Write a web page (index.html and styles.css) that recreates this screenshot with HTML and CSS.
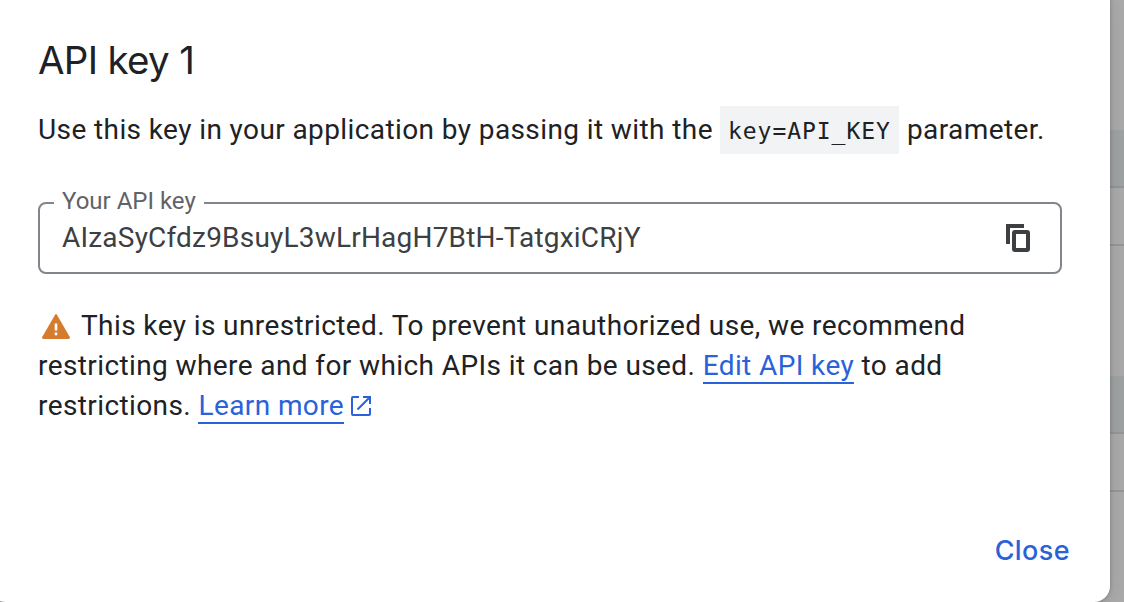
FILE: index.html
```html
<!DOCTYPE html>
<html lang="en">
<head>
<meta charset="utf-8">
<title>API key 1</title>
<link rel="stylesheet" href="styles.css">
</head>
<body>
<div class="screen">
  <div class="page-behind" aria-hidden="true">
    <div class="space"></div><div class="row head"></div><div class="row"></div>
    <div class="space"></div><div class="row head"></div><div class="row"></div>
  </div>
  <main class="dialog" role="dialog" aria-labelledby="title">
    <h1 class="title" id="title">API key 1</h1>
    <p class="intro"><span class="intro-text">Use this key in your application by passing it with the</span><code class="code">key=API_KEY</code><span class="intro-end">parameter.</span></p>
    <fieldset class="field">
      <legend class="label">Your API key</legend>
      <span class="value">AIzaSyCfdz9BsuyL3wLrHagH7BtH-TatgxiCRjY</span>
      <svg class="copy" viewBox="0 0 24 28"><path d="M2 20V2H18" fill="none" stroke="#3c4043" stroke-width="4"/><rect x="8" y="8" width="14" height="18" rx="1" fill="none" stroke="#3c4043" stroke-width="4"/></svg>
    </fieldset>
    <p class="notice"><svg class="warn" viewBox="0 0 28 25"><path d="M13.1.7q.9-1.3 1.8 0L27.8 23q.7 1.8-1.2 2H1.4Q-.5 24.800.2 23Z" fill="#d57b2e"/><path d="M12.7 9.500h2.600v7h-2.600zM12.700 18.500h2.600v2.700h-2.600z" fill="#fff"/></svg>This key is unrestricted. To prevent unauthorized use, we recommend<br>restricting where and for which APIs it can be used. <a class="link">Edit API key</a> to add<br>restrictions. <a class="link">Learn more</a><svg class="external" viewBox="0 0 20 20"><path d="M8 1H2Q1 1 1 2V18Q1 19 2 19H18Q19 19 19 18V12M12 1H19V8M18.500 1.500L6.500 13.500" fill="none" stroke="#2962d9" stroke-width="2"/></svg></p>
    <div class="actions"><button class="close">Close</button></div>
  </main>
</div>
</body>
</html>
```
FILE: styles.css
```css
* { box-sizing: border-box; }
body { margin: 0; font-family: Roboto, "Liberation Sans", sans-serif; color: #202124; overflow: hidden; }
.screen { display: grid; width: 1124px; height: 602px; overflow: hidden; }
.page-behind, .dialog { grid-area: 1 / 1; }
.page-behind { background: #ababab; }
.space { height: 130px; }
.row { height: 58px; border-bottom: 2px solid #959698; }
.head { background: #a0a3a3; }
.dialog {
  width: 1120px; height: 618px; margin: -16px 0 0 -10px; padding: 48px 38px 0 48px;
  background: #fff; border-radius: 16px;
  box-shadow: 0 8px 24px rgba(0,0,0,.1), 0 0 4px rgba(0,0,0,.24);
  z-index: 1;
}
.title { margin: 0; font: 400 38.5px/56px Inter, sans-serif; letter-spacing: -.7px; }
.intro { display: flex; align-items: center; height: 48px; margin: 18px 0 0; font-size: 28px; letter-spacing: .4px; white-space: nowrap; }
.intro-text { width: 682px; margin-top: -2px; }
.code { width: 179px; height: 48px; padding-left: 8px; background: #f1f3f4; font: 23px/50px "DejaVu Sans Mono", monospace; letter-spacing: .95px; }
.intro-end { margin: -2px 0 0 8px; }
.field { display: flex; align-items: center; justify-content: space-between; width: 1024px; height: 87px; margin: 33px 0 0; padding: 0 30px 15px 22px; border: 2px solid #80868b; border-radius: 8px; }
.label { margin-left: -8px; padding: 0 8px 4px; font-size: 24px; line-height: 28px; color: #5f6368; }
.value { font-size: 28px; line-height: 36px; letter-spacing: .2px; color: #3c4043; }
.copy { width: 24px; height: 28px; }
.notice { margin: 32px 0 0; font-size: 28px; line-height: 40px; letter-spacing: .4px; white-space: nowrap; }
.warn { width: 28px; height: 25px; margin: 0 11px 0 4px; vertical-align: -4px; }
.link { display: inline-block; height: 38px; line-height: 40px; border-bottom: 2px solid #2962d9; color: #2962d9; vertical-align: top; }
.external { width: 20px; height: 20px; margin-left: 7px; vertical-align: -1px; }
.actions { display: flex; justify-content: flex-end; margin-top: 100px; padding-right: 2px; }
.close { padding: 0; border: 0; background: none; color: #2962d9; font: 500 27px/50px Inter, sans-serif; letter-spacing: .4px; }
```
